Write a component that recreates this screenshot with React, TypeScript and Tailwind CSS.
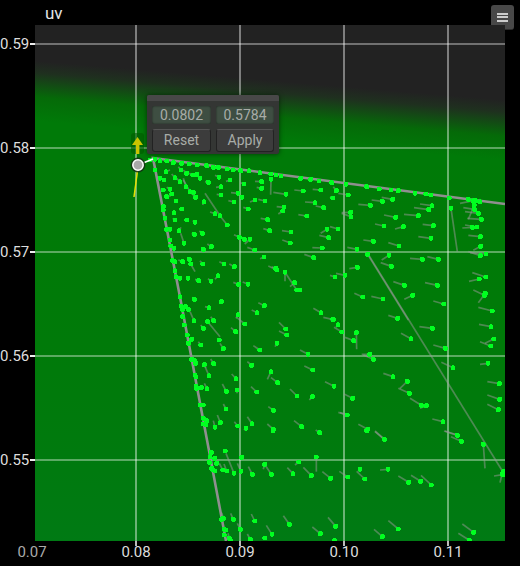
import React from 'react';

// [headX, headY, tailX, tailY] in zoomed-in pixels, tail optional
type Pt = number[];
interface Group {
  ox: number;
  oy: number;
  pts: Pt[];
}

const groups: Group[] = [
  {
    ox: 150,
    oy: 150,
    pts: [
      [0, 30], [15, 28], [30, 32], [50, 33], [70, 38], [95, 40], [118, 42], [142, 45], [170, 47], [190, 52], [205, 52],
      [232, 57], [250, 60], [272, 62], [297, 62], [330, 68], [362, 72], [378, 75], [393, 78], [452, 85], [482, 88], [507, 93],
      [15, 60], [30, 85], [42, 90], [40, 120], [50, 140], [40, 170], [40, 180], [45, 205], [50, 238], [60, 238], [60, 270],
      [62, 288], [72, 295], [68, 332], [75, 335], [75, 362], [78, 380], [90, 385], [90, 440],
      [48, 65, 60, 60], [93, 60, 85, 50], [110, 70, 100, 60], [128, 75, 118, 70], [140, 73, 128, 76], [150, 85, 140, 75],
      [90, 95, 80, 85], [75, 83, 65, 72], [60, 118, 50, 112], [65, 132, 58, 140], [108, 110, 100, 85], [120, 125, 100, 90],
      [130, 127, 115, 122], [137, 142, 125, 130], [78, 153], [162, 155, 158, 165], [95, 177, 88, 180], [72, 188],
      [110, 210], [135, 217, 128, 212], [75, 210, 68, 205], [87, 242, 93, 232], [102, 280, 92, 250], [133, 253, 125, 250],
      [157, 250, 148, 243], [160, 298], [184, 290, 172, 282], [195, 191, 180, 186], [210, 197, 165, 130], [232, 225, 212, 200],
      [175, 97, 165, 95], [207, 82, 195, 76], [213, 110, 198, 112], [240, 90, 228, 94], [282, 102, 270, 98], [213, 135, 200, 133],
      [252, 156, 235, 152], [264, 130, 243, 128], [276, 142, 270, 135], [295, 177, 280, 172], [315, 150, 300, 156],
      [345, 153, 325, 148], [335, 95, 315, 94], [335, 115, 320, 112], [363, 88, 362, 134], [408, 133, 370, 127], [402, 172, 380, 170],
      [398, 183, 385, 192], [470, 198, 445, 194], [495, 158, 465, 156], [521, 173, 497, 168], [512, 120, 488, 118], [460, 123, 433, 120],
      [353, 209, 332, 205], [359, 242, 340, 236], [423, 246, 396, 242], [421, 279, 397, 270], [517, 294, 487, 293], [536, 263, 508, 256],
      [531, 238, 512, 250], [491, 323, 463, 313], [434, 398, 420, 410], [440, 420, 405, 367], [450, 420, 440, 418], [405, 367, 405, 394],
      [380, 360, 355, 348], [377, 355, 365, 350], [342, 321, 330, 326], [314, 300, 292, 292], [300, 268, 284, 282], [283, 268, 270, 262],
      [268, 262, 252, 254], [222, 342, 208, 335], [253, 350, 238, 342], [158, 342, 150, 332], [122, 342, 135, 365], [118, 328],
      [98, 335, 85, 330], [146, 392, 135, 388], [114, 385, 108, 382], [204, 377, 195, 388], [183, 394, 174, 386], [266, 403, 250, 397],
      [294, 403, 278, 396], [133, 448, 127, 442],
    ],
  },
  {
    ox: 330,
    oy: 170,
    pts: [
      [5, 38], [48, 43], [110, 50], [148, 57], [183, 60], [205, 62], [255, 70], [287, 72], [302, 75], [358, 84], [415, 88], [437, 92], [450, 95],
      [19, 62, 10, 50], [55, 75, 25, 70], [8, 84, 0, 80], [157, 94, 125, 90], [188, 88, 155, 82], [121, 106, 85, 103], [306, 107, 270, 102],
      [296, 119, 252, 113], [62, 127, 35, 128], [63, 140, 35, 130], [197, 142, 162, 135], [265, 137, 222, 133], [162, 168, 135, 162],
      [220, 170, 195, 177], [310, 167, 278, 163], [24, 177, 0, 170], [130, 214, 100, 210], [207, 228, 175, 218], [303, 205, 265, 200],
      [81, 238, 52, 232], [177, 256, 155, 270], [277, 268, 240, 265], [325, 268, 292, 260], [184, 289, 152, 278], [82, 292, 58, 296],
      [45, 316, 18, 310], [15, 321, 0, 316], [223, 346, 190, 335], [322, 346, 285, 338], [98, 381, 73, 370], [159, 387, 124, 379],
      [248, 376, 223, 388], [341, 402, 310, 393], [203, 445, 175, 436], [8, 447, 0, 450], [363, 115, 382, 245], [113, 253, 235, 450],
      [433, 105, 415, 148], [445, 130, 405, 125], [433, 118, 400, 113], [454, 148, 412, 145], [427, 172, 397, 174], [441, 171, 405, 165],
      [451, 200, 415, 196], [452, 229, 430, 241], [468, 252, 420, 248], [451, 257, 415, 245], [467, 321, 427, 308], [448, 327, 417, 334],
      [466, 370, 445, 398], [463, 376, 430, 360], [487, 423, 445, 412], [430, 92, 390, 100],
    ],
  },
  {
    ox: 170,
    oy: 300,
    pts: [
      [33, 18], [37, 28], [47, 20], [55, 28], [38, 50], [43, 75], [52, 105], [55, 130], [65, 118], [65, 178], [75, 182], [77, 190],
      [75, 225], [78, 230], [78, 258], [80, 265], [90, 315], [100, 315], [100, 355], [110, 362], [100, 372], [107, 375],
      [72, 62, 60, 35], [100, 85, 92, 75], [117, 23, 105, 20], [131, 62, 122, 50], [113, 65, 150, 110], [148, 120], [92, 135, 85, 125],
      [160, 146, 150, 130], [197, 95, 183, 83], [224, 72, 200, 52], [204, 44, 198, 55], [261, 38, 245, 30], [283, 17, 265, 8], [154, 5],
      [347, 87, 327, 67], [350, 105, 327, 93], [321, 130, 315, 140], [269, 150, 250, 137], [414, 163, 390, 150], [453, 38, 430, 25],
      [490, 59, 460, 52], [504, 74, 498, 82], [516, 96, 492, 82], [245, 196, 232, 185], [131, 191, 122, 177], [103, 194, 108, 203],
      [117, 227, 105, 200], [198, 236, 185, 222], [303, 215, 292, 238], [323, 248, 303, 233], [428, 210, 403, 198], [492, 259, 465, 245],
      [111, 266, 103, 250], [94, 263], [169, 274, 157, 252], [201, 270, 201, 280], [260, 276, 243, 260], [381, 288, 360, 267], [427, 290, 418, 300],
      [168, 327, 160, 312], [310, 331, 295, 320], [532, 345, 505, 337], [151, 368, 142, 345], [135, 382, 130, 362], [203, 378, 193, 365],
      [246, 371, 232, 350], [228, 385, 222, 390], [395, 380, 372, 362], [310, 388, 292, 372],
    ],
  },
  {
    ox: 340,
    oy: 320,
    pts: [
      [5, 36, 0, 36], [41, 62, 15, 52], [49, 38, 50, 88], [213, 56, 183, 40], [277, 25, 238, 20], [316, 85, 280, 75], [453, 20, 417, 13],
      [461, 57, 435, 70], [452, 78, 420, 65], [89, 103, 65, 103], [100, 118, 70, 105], [159, 170, 130, 160], [339, 143, 304, 127],
      [444, 130, 420, 133], [202, 184, 180, 205], [208, 220, 175, 205], [244, 256, 210, 235], [259, 257, 240, 265], [478, 191, 442, 185],
      [479, 238, 442, 225], [475, 269, 442, 253], [38, 235, 12, 222], [22, 285, 0, 278], [309, 305, 277, 297], [83, 328, 55, 313],
      [352, 345, 315, 333], [132, 357, 105, 333],
    ],
  },
  {
    ox: 200,
    oy: 430,
    pts: [
      [34, 67], [30, 80], [44, 85], [28, 97], [50, 100], [35, 115], [40, 120], [45, 123], [68, 120, 58, 100], [80, 123, 72, 102],
      [65, 268], [70, 265, 65, 248], [72, 298], [78, 300], [73, 315], [88, 325, 84, 310], [92, 332],
      [76, 63], [102, 130, 78, 70], [123, 124, 112, 100], [125, 82, 120, 90], [157, 133, 145, 110], [214, 133, 195, 105], [194, 103, 190, 118],
      [296, 96, 285, 105], [349, 81, 349, 125], [279, 131, 262, 113], [334, 137, 310, 112], [392, 145, 367, 125], [443, 141, 418, 124],
      [494, 147, 470, 124], [480, 118, 475, 124], [359, 8, 347, 0], [219, 2], [100, 268, 92, 250], [164, 273, 154, 252], [268, 283, 250, 257],
      [407, 289, 384, 262], [361, 311, 337, 291], [216, 313, 199, 286], [194, 324, 189, 328], [121, 298, 112, 280], [151, 328, 142, 312],
      [404, 332], [500, 2],
    ],
  },
  {
    ox: 370,
    oy: 430,
    pts: [
      [43, 28, 15, 5], [262, 16, 222, 3], [274, 34, 243, 20], [340, 43, 345, 115], [400, 125], [398, 134, 372, 138], [396, 132, 390, 158],
      [54, 118, 30, 120], [116, 157, 85, 138], [152, 154, 123, 136], [184, 165, 153, 136], [85, 297, 55, 272], [37, 320, 12, 298],
      [311, 307, 277, 282], [298, 331, 265, 310],
    ],
  },
];

const verticals = [136, 240, 344, 448];
const horizontals = [44, 148, 252, 356, 460];
const yLabels = ['0.59', '0.58', '0.57', '0.56', '0.55'];
const xLabels = ['0.07', '0.08', '0.09', '0.10', '0.11'];

const PlotDrawing = () => (
  <svg viewBox="35 25 470 516" className="absolute inset-0 w-full h-full">
    <defs>
      <linearGradient id="bg" gradientUnits="userSpaceOnUse" x1="38" y1="61" x2="33" y2="121">
        <stop offset="0" stopColor="#222222" />
        <stop offset="0.2" stopColor="#1f301f" />
        <stop offset="0.6" stopColor="#056a08" />
        <stop offset="1" stopColor="#007a08" />
      </linearGradient>
      <linearGradient id="bg2" x1="0" y1="0" x2="0" y2="1">
        <stop offset="0" stopColor="#007a00" stopOpacity="0" />
        <stop offset="1" stopColor="#007a14" />
      </linearGradient>
    </defs>
    <rect x="35" y="25" width="470" height="516" fill="url(#bg)" />
    <rect x="35" y="140" width="470" height="401" fill="url(#bg2)" />

    {verticals.map((x) => (
      <line key={x} x1={x} y1="25" x2={x} y2="541" stroke="#ffffff" strokeOpacity="0.42" strokeWidth="2" />
    ))}
    {horizontals.map((y) => (
      <line key={y} x1="35" y1={y} x2="505" y2={y} stroke="#ffffff" strokeOpacity="0.36" strokeWidth="1.8" />
    ))}

    {/* tails first so the dots stay on top */}
    {groups.map((g) =>
      g.pts.map((p, i) =>
        p.length === 4 ? (
          <line
            key={`${g.ox}-t${i}`}
            x1={g.ox + p[2] / 3}
            y1={g.oy + p[3] / 3}
            x2={g.ox + p[0] / 3}
            y2={g.oy + p[1] / 3}
            stroke="#9a9a9a"
            strokeOpacity="0.5"
            strokeWidth="1.7"
          />
        ) : null
      )
    )}

    <line x1="368" y1="254" x2="503" y2="472" stroke="#9a9a9a" strokeOpacity="0.5" strokeWidth="1.7" />
    <polyline points="505,204 153,158 180,297 207,440 226,541" fill="none" stroke="#8f8f8f" strokeWidth="2.6" />

    {groups.map((g) =>
      g.pts.map((p, i) => (
        <circle
          key={`${g.ox}-d${i}`}
          cx={g.ox + p[0] / 3}
          cy={g.oy + p[1] / 3}
          r="2.5"
          fill="#00ff20"
          shapeRendering="crispEdges"
        />
      ))
    )}

    {/* handle */}
    <rect x="131" y="133" width="13" height="21" rx="3" fill="#005a00" opacity="0.6" />
    <polygon points="137.5,137 143,145 132,145" fill="#c8c400" />
    <rect x="136" y="145" width="3.4" height="9" fill="#c8c400" />
    <line x1="138" y1="167" x2="134" y2="197" stroke="#e4e000" strokeWidth="1.5" />
    <line x1="143" y1="163" x2="153" y2="159" stroke="#ffffff" strokeWidth="1.6" />
    <circle cx="138" cy="165" r="7.4" fill="#143014" opacity="0.85" />
    <circle cx="138" cy="165" r="5.2" fill="#a8a8a8" stroke="#ffffff" strokeWidth="1.5" />
  </svg>
);

const ValuePopup = () => (
  <div className="absolute left-[112px] top-[70px] w-[132px] h-[59px] bg-[#343634] shadow-[0_0_5px_rgba(0,0,0,0.55)] rounded-[2px]">
    <div className="h-[6px] bg-[#484848] rounded-t-[2px]" />
    <div className="grid grid-cols-[59px_58px] gap-x-[5px] gap-y-[5px] pl-[5px] pt-[5px] text-[14px] text-[#a8aca8] text-center">
      <div className="h-[18px] leading-[19px] bg-[#3e4e42] rounded-[2px] shadow-[inset_0_0_2px_rgba(0,0,0,0.6)]">0.0802</div>
      <div className="h-[18px] leading-[19px] bg-[#3e4e42] rounded-[2px] shadow-[inset_0_0_2px_rgba(0,0,0,0.6)]">0.5784</div>
      <div className="h-[23px] leading-[21px] bg-[#3c3c3c] rounded-[3px] border border-[#222222] border-t-[#555555]">Reset</div>
      <div className="h-[23px] leading-[21px] bg-[#3c3c3c] rounded-[3px] border border-[#222222] border-t-[#555555]">Apply</div>
    </div>
  </div>
);

export default function App() {
  return (
    <div className="relative w-[520px] h-[566px] bg-black overflow-hidden text-[#dddddd] [font-family:Roboto,sans-serif]">
      <div className="h-[25px] pl-[45px] text-[17px] leading-[26px] text-[#e4e4e4]">uv</div>

      <button className="absolute right-[6px] top-[5px] w-[23px] h-[25px] flex flex-col items-center justify-center gap-[1.5px] bg-[#484848] border-b border-[#2c2c2c] rounded-[3px]">
        <span className="w-[11px] h-[2px] bg-[#cccccc]" />
        <span className="w-[11px] h-[2px] bg-[#cccccc]" />
        <span className="w-[11px] h-[2px] bg-[#cccccc]" />
      </button>

      <div className="flex h-[516px]">
        <div className="w-[35px] shrink-0 flex flex-col -mt-[33px]">
          {yLabels.map((label) => (
            <div key={label} className="h-[104px] shrink-0 flex items-center justify-end text-[15px]">
              <span className="mr-px">{label}</span>
              <span className="w-[5px] h-[2px] bg-[#eeeeee]" />
            </div>
          ))}
        </div>
        <div className="relative w-[470px] h-[516px]">
          <PlotDrawing />
          <ValuePopup />
        </div>
      </div>

      <div className="flex -ml-[20px] text-[15px] leading-[20px] pt-px">
        {xLabels.map((label, i) => (
          <div key={label} className={`relative w-[104px] shrink-0 text-center ${i === 0 ? 'text-[#aaaaaa]' : ''}`}>
            {i > 0 && <span className="absolute left-[51px] -top-px w-[2px] h-[5px] bg-[#bbbbbb]" />}
            {label}
          </div>
        ))}
      </div>
    </div>
  );
}
